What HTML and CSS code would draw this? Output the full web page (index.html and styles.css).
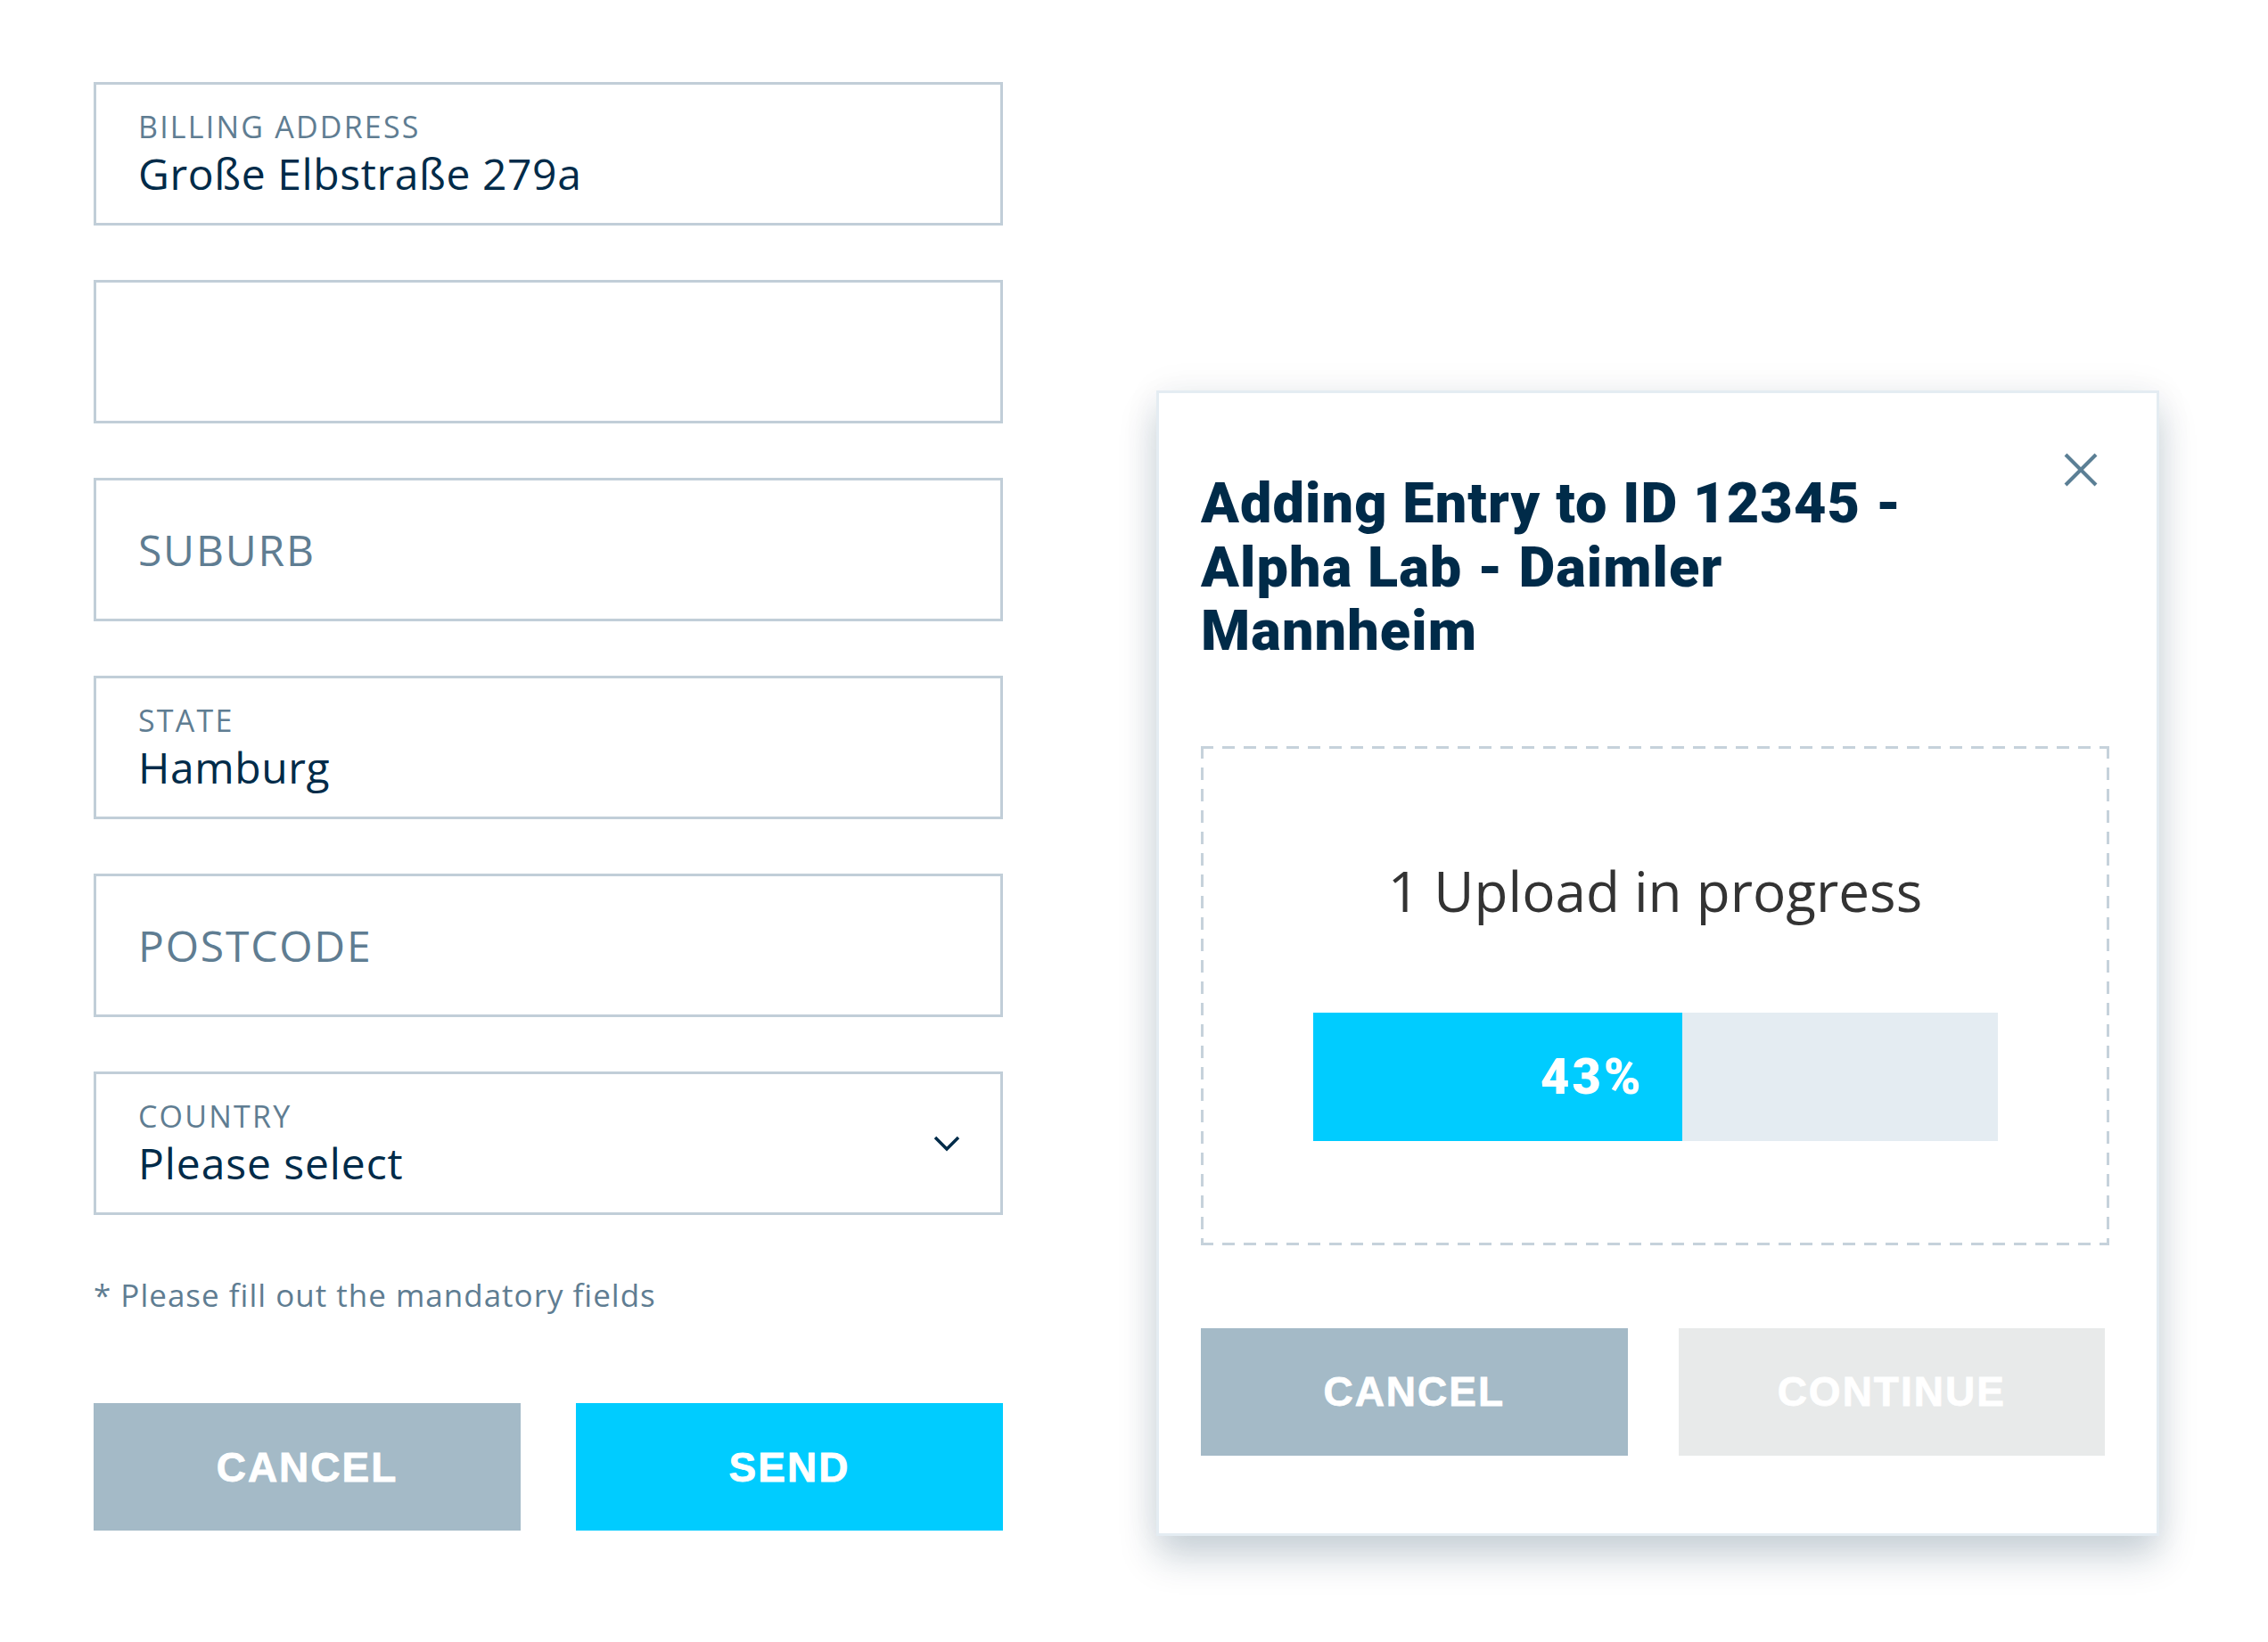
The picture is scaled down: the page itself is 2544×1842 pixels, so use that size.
FILE: index.html
```html
<!DOCTYPE html>
<html lang="de">
<head>
<meta charset="utf-8">
<title>Billing form and upload dialog</title>
<link rel="stylesheet" href="styles.css">
</head>
<body>
<div class="page">
  <form class="form">
    <div class="fields">
      <div class="field">
        <span class="label">BILLING ADDRESS</span>
        <span class="value">Große Elbstraße 279a</span>
      </div>
      <div class="field"></div>
      <div class="field">
        <span class="placeholder">SUBURB</span>
      </div>
      <div class="field">
        <span class="label">STATE</span>
        <span class="value">Hamburg</span>
      </div>
      <div class="field">
        <span class="placeholder">POSTCODE</span>
      </div>
      <div class="field field-select">
        <div class="select-text">
          <span class="label">COUNTRY</span>
          <span class="value">Please select</span>
        </div>
        <svg class="chevron" width="30" height="18" viewBox="0 0 30 18" aria-hidden="true">
          <polyline points="2,2 15,15 28,2" fill="none" stroke="#002b49" stroke-width="3.5"/>
        </svg>
      </div>
    </div>
    <p class="note">* Please fill out the mandatory fields</p>
    <div class="actions">
      <button type="button" class="btn btn-secondary">CANCEL</button>
      <button type="button" class="btn btn-primary">SEND</button>
    </div>
  </form>

  <section class="modal">
    <h2 class="modal-title">Adding Entry to ID 12345 - Alpha Lab - Daimler Mannheim</h2>
    <button type="button" class="modal-close" aria-label="Close">
      <svg width="38" height="38" viewBox="0 0 38 38" aria-hidden="true">
        <line x1="2" y1="2" x2="36" y2="36" stroke="#5b7f95" stroke-width="4"/>
        <line x1="36" y1="2" x2="2" y2="36" stroke="#5b7f95" stroke-width="4"/>
      </svg>
    </button>
    <div class="dropzone">
      <p class="upload-text">1 Upload in progress</p>
      <div class="progress">
        <div class="progress-fill" style="width: 414px;"><span class="progress-label">43%</span></div>
      </div>
    </div>
    <div class="modal-actions">
      <button type="button" class="btn btn-secondary">CANCEL</button>
      <button type="button" class="btn btn-disabled">CONTINUE</button>
    </div>
  </section>
</div>
</body>
</html>
```

FILE: styles.css
```css
* {
  box-sizing: border-box;
}

html, body {
  margin: 0;
  padding: 0;
  background: #ffffff;
}

body {
  font-family: "Open Sans", "Noto Sans", sans-serif;
  color: #002b49;
}

.page {
  min-height: 100vh;
  display: flex;
  align-items: flex-start;
  gap: 172px;
  padding: 92px 0 0 105px;
}

/* ---------- form ---------- */
.form {
  width: 1020px;
  margin: 0;
}

.fields {
  display: flex;
  flex-direction: column;
  gap: 61px;
}

.field {
  height: 161px;
  border: 3px solid #c1ced8;
  padding: 0 45px 0 47px;
  display: flex;
  flex-direction: column;
  justify-content: center;
  gap: 5px;
}

.label {
  font-size: 34px;
  line-height: 40px;
  color: #5f7d92;
  letter-spacing: 2.2px;
}

.value {
  font-size: 48px;
  line-height: 56px;
  color: #002b49;
  letter-spacing: 0.6px;
}

.placeholder {
  font-size: 48px;
  line-height: 56px;
  color: #5f7d92;
  letter-spacing: 1.8px;
}

.field-select {
  flex-direction: row;
  align-items: center;
  justify-content: space-between;
}

.select-text {
  display: flex;
  flex-direction: column;
  gap: 5px;
}

.select-text .value {
  letter-spacing: 0.9px;
}

.chevron {
  display: block;
}

.note {
  margin: 70px 0 0;
  font-size: 35px;
  line-height: 40px;
  color: #5f7d92;
  letter-spacing: 1px;
}

.actions {
  margin-top: 101px;
  display: grid;
  grid-template-columns: 1fr 1fr;
  gap: 62px;
}

.btn {
  height: 143px;
  border: 0;
  margin: 0;
  padding: 0;
  font-family: "Liberation Sans", Arial, sans-serif;
  font-weight: 700;
  font-size: 46px;
  letter-spacing: 2px;
  color: #ffffff;
  -webkit-text-stroke: 0.8px #ffffff;
  cursor: pointer;
}

.btn-secondary {
  background: #a4bac7;
}

.btn-primary {
  background: #00ccff;
}

.btn-disabled {
  background: #e8eaea;
}

/* ---------- modal ---------- */
.modal {
  position: relative;
  width: 1125px;
  margin-top: 346px;
  border: 3px solid #e4ecf2;
  background: #ffffff;
  padding: 88px 53px 87px 47px;
  box-shadow: 0 24px 40px rgba(0, 47, 76, 0.2), 0 0 40px rgba(0, 47, 76, 0.06);
}

.modal-title {
  margin: 0;
  width: 840px;
  font-family: "Roboto", "Liberation Sans", sans-serif;
  font-weight: 900;
  font-size: 63px;
  line-height: 71.5px;
  letter-spacing: 1.1px;
  color: #002b49;
}

.modal-close {
  position: absolute;
  top: 67px;
  right: 66px;
  width: 38px;
  height: 38px;
  padding: 0;
  border: 0;
  background: none;
  cursor: pointer;
}

.modal-close svg {
  display: block;
}

.dropzone {
  margin-top: 93px;
  padding: 126px 0 117px;
  display: flex;
  flex-direction: column;
  align-items: center;
  background-color: #ffffff;
  background-image:
    repeating-linear-gradient(90deg, #c6d2db 0 14px, transparent 14px 24px),
    repeating-linear-gradient(90deg, #c6d2db 0 14px, transparent 14px 24px),
    repeating-linear-gradient(180deg, #c6d2db 0 14px, transparent 14px 24px),
    repeating-linear-gradient(180deg, #c6d2db 0 14px, transparent 14px 24px);
  background-size: 100% 3px, 100% 3px, 3px 100%, 3px 100%;
  background-position: 0 0, 0 100%, 0 0, 100% 0;
  background-repeat: no-repeat;
}

.upload-text {
  margin: 0;
  font-size: 62px;
  line-height: 72px;
  color: #333333;
  text-align: center;
}

.progress {
  margin-top: 101px;
  width: 768px;
  height: 144px;
  background: #e4ecf2;
  display: flex;
}

.progress-fill {
  height: 100%;
  background: #00ccff;
  display: flex;
  align-items: center;
  justify-content: flex-end;
  padding-right: 43px;
}

.progress-label {
  font-family: "Roboto", "Liberation Sans", sans-serif;
  font-weight: 900;
  font-size: 56px;
  letter-spacing: 3px;
  color: #ffffff;
}

.modal-actions {
  margin-top: 93px;
  width: 1014px;
  display: grid;
  grid-template-columns: 1fr 1fr;
  gap: 57px;
}
```
